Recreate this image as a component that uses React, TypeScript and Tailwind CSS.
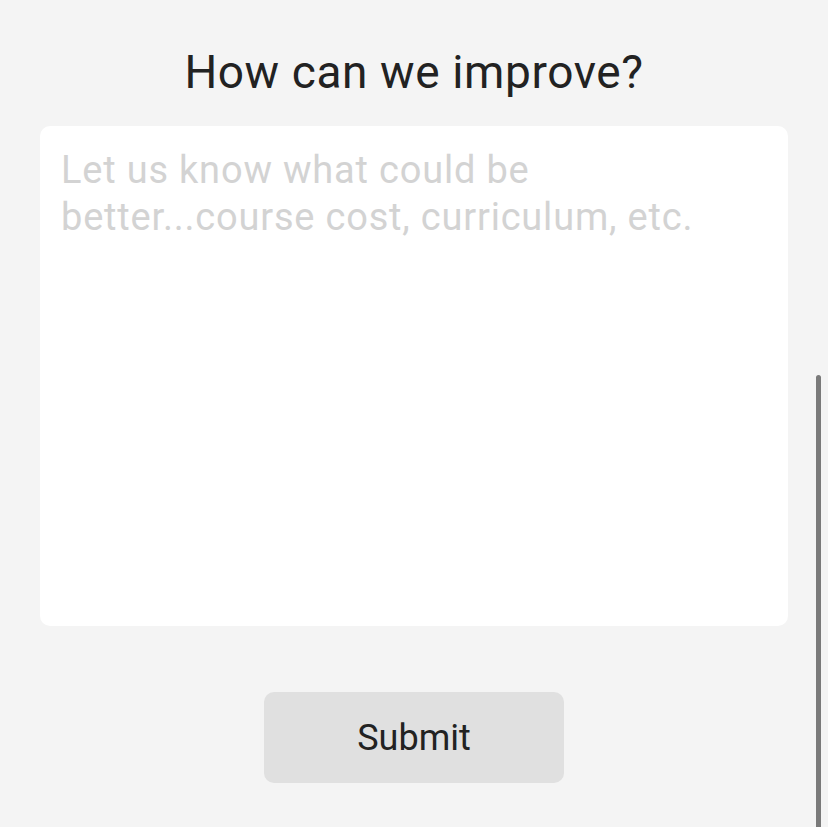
export default function App() {
  return (
    <div className="relative h-[827px] w-[828px] overflow-hidden bg-[#f4f4f4] font-['Roboto',sans-serif]">
      <div className="flex flex-col items-center px-10 pt-[42px]">
        <h1 className="text-[46px] leading-[60px] tracking-[0.6px] text-[#222]">How can we improve?</h1>
        <textarea
          className="mt-6 h-[500px] w-full resize-none rounded-[10px] bg-white pb-[18px] pt-[21px] pl-[21px] pr-[30px] text-[38px] leading-[47px] tracking-[0.8px] text-[#222] outline-none placeholder:text-[#d3d3d3]"
          placeholder="Let us know what could be better...course cost, curriculum, etc."
        />
        <button className="mt-[66px] h-[91px] w-[300px] rounded-[10px] bg-[#e0e0e0] text-[36px] text-[#222]">
          Submit
        </button>
      </div>
      <div className="absolute right-[7px] top-[375px] h-[460px] w-[5px] rounded-t-full bg-[#7a7a7a]" />
    </div>
  )
}
